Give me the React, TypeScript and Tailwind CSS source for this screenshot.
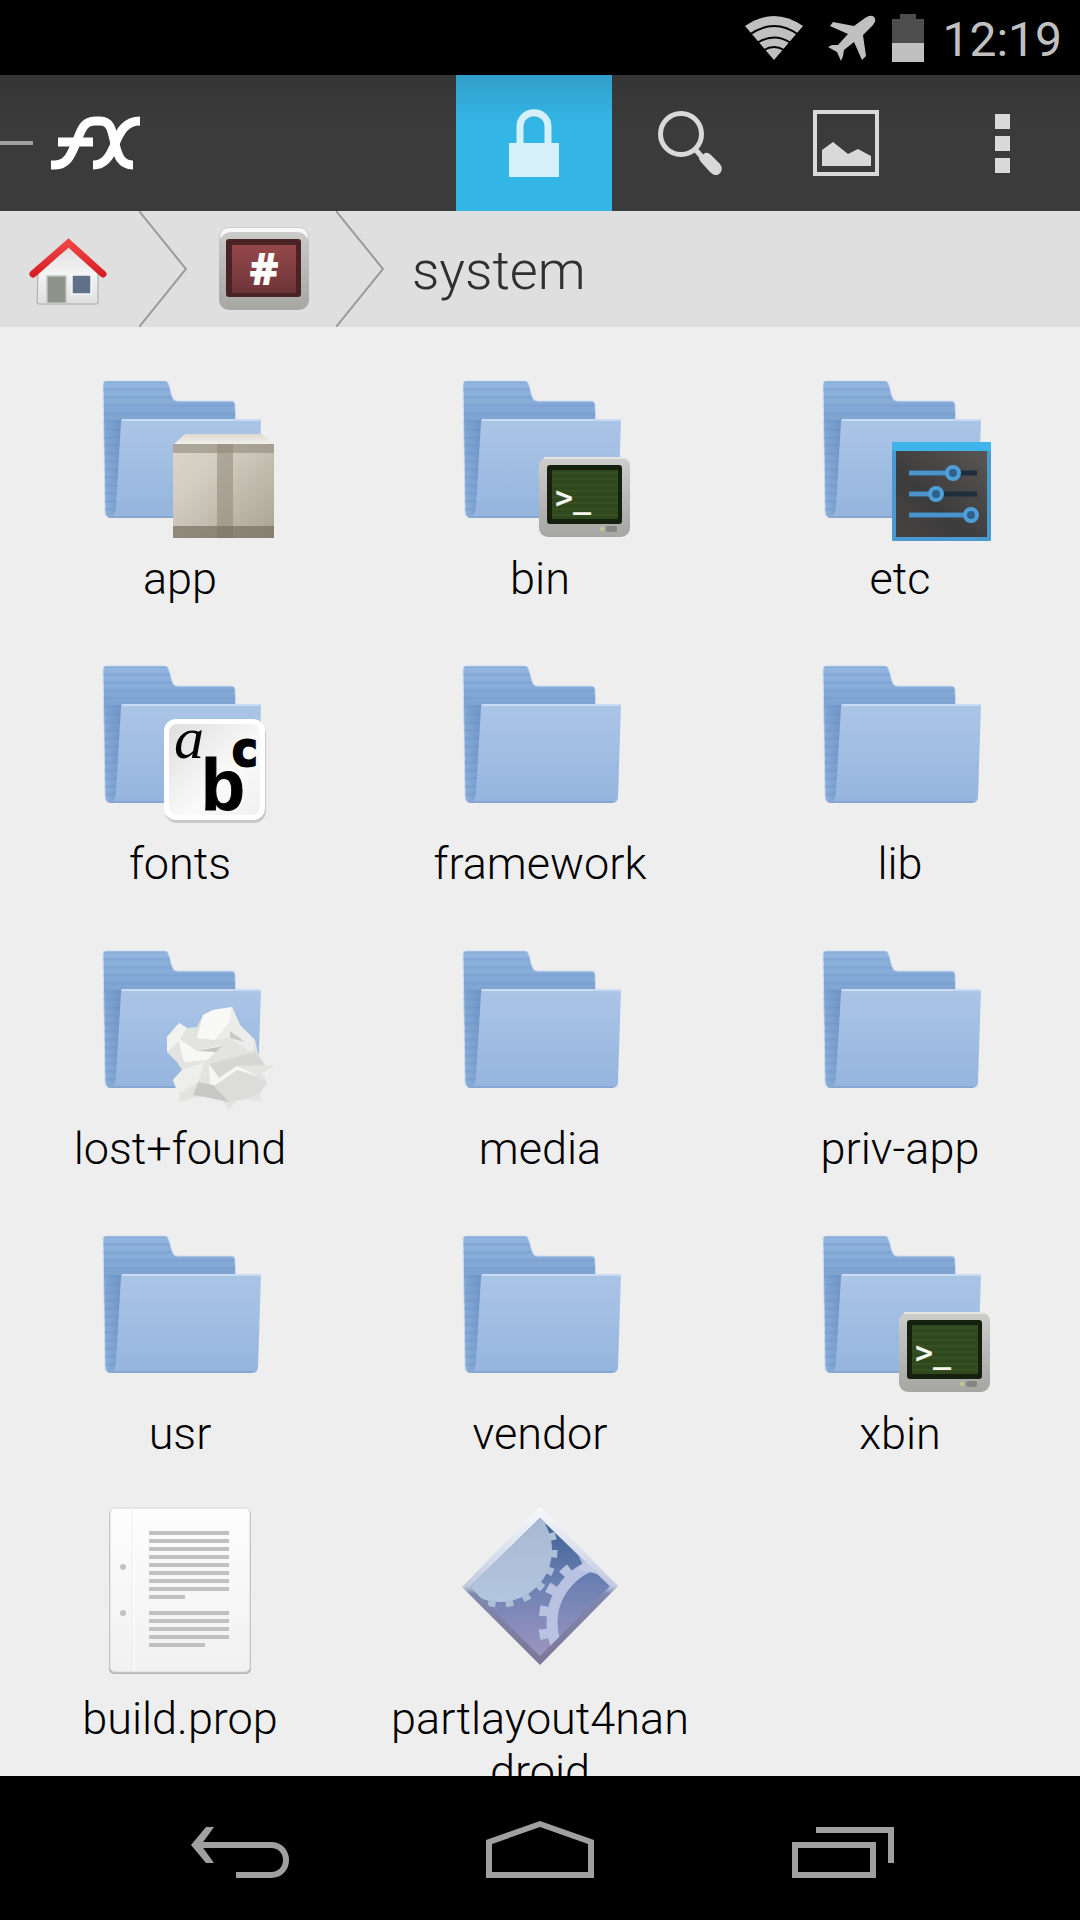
// App.tsx
import type { ReactNode } from "react";

type Entry = { name: string; icon: ReactNode };

// Gradientes compartilhados pelos ícones
function Gradients() {
  return (
    <svg className="absolute h-0 w-0" aria-hidden="true">
      <defs>
        <linearGradient id="folderBack" x1="0" y1="0" x2="0" y2="1">
          <stop offset="0" stopColor="#94b6df" />
          <stop offset="0.28" stopColor="#7fa4d2" />
          <stop offset="1" stopColor="#8db0da" />
        </linearGradient>
        <linearGradient id="folderFront" x1="0" y1="0" x2="0" y2="1">
          <stop offset="0" stopColor="#abc5e6" />
          <stop offset="1" stopColor="#95b5de" />
        </linearGradient>
        <pattern id="folderLines" width="10" height="8" patternUnits="userSpaceOnUse">
          <rect width="10" height="3" y="4" fill="#6f97ca" opacity="0.3" />
        </pattern>
        <linearGradient id="folderShade" x1="0" y1="0" x2="1" y2="0">
          <stop offset="0" stopColor="#5d87bd" stopOpacity="0" />
          <stop offset="1" stopColor="#5d87bd" stopOpacity="0.5" />
        </linearGradient>
        <linearGradient id="metal" x1="0" y1="0" x2="0" y2="1">
          <stop offset="0" stopColor="#cdcdcb" />
          <stop offset="0.5" stopColor="#b9b9b9" />
          <stop offset="1" stopColor="#a6a6a2" />
        </linearGradient>
        <linearGradient id="carton" x1="0" y1="0" x2="1" y2="1">
          <stop offset="0" stopColor="#d9d5c9" />
          <stop offset="0.3" stopColor="#d3cec2" />
          <stop offset="1" stopColor="#a9a393" />
        </linearGradient>
        <linearGradient id="cartonTop" x1="0" y1="0" x2="0" y2="1">
          <stop offset="0" stopColor="#dddad0" />
          <stop offset="1" stopColor="#f3f2ee" />
        </linearGradient>
        <linearGradient id="redScreen" x1="0" y1="0" x2="0" y2="1">
          <stop offset="0" stopColor="#95484a" />
          <stop offset="1" stopColor="#6d3538" />
        </linearGradient>
        <linearGradient id="roof" x1="0" y1="0" x2="0" y2="1">
          <stop offset="0" stopColor="#ef4444" />
          <stop offset="1" stopColor="#d81f26" />
        </linearGradient>
        <linearGradient id="wall" x1="0" y1="0" x2="0" y2="1">
          <stop offset="0" stopColor="#dcdcdc" />
          <stop offset="0.5" stopColor="#f4f4f4" />
          <stop offset="1" stopColor="#dfdfdf" />
        </linearGradient>
        <linearGradient id="darkPanel" x1="1" y1="0" x2="0" y2="1">
          <stop offset="0" stopColor="#595654" />
          <stop offset="0.6" stopColor="#3d3c3c" />
          <stop offset="1" stopColor="#454342" />
        </linearGradient>
        <linearGradient id="tile" x1="0" y1="0" x2="1" y2="1">
          <stop offset="0" stopColor="#dedede" />
          <stop offset="0.6" stopColor="#fafafa" />
          <stop offset="1" stopColor="#f0f0f0" />
        </linearGradient>
        <linearGradient id="page" x1="0" y1="0" x2="0" y2="1">
          <stop offset="0" stopColor="#fdfdfd" />
          <stop offset="1" stopColor="#f1f1f1" />
        </linearGradient>
        <linearGradient id="gem" x1="0" y1="0" x2="0" y2="1">
          <stop offset="0" stopColor="#3d5f94" />
          <stop offset="0.5" stopColor="#6e82b4" />
          <stop offset="1" stopColor="#9c94bf" />
        </linearGradient>
        <linearGradient id="gemEdge" x1="0" y1="0" x2="0" y2="1">
          <stop offset="0" stopColor="#f6fafd" />
          <stop offset="0.5" stopColor="#c3cae0" />
          <stop offset="0.55" stopColor="#8088ad" />
          <stop offset="1" stopColor="#7c7797" />
        </linearGradient>
        <linearGradient id="cog" x1="0" y1="0" x2="0" y2="1">
          <stop offset="0" stopColor="#a4b6ce" />
          <stop offset="1" stopColor="#b3c6df" />
        </linearGradient>
        <clipPath id="gemClip">
          <path d="M100 18 170 86 100 156 30 87Z" />
        </clipPath>
      </defs>
    </svg>
  );
}

function Folder({ children }: { children?: ReactNode }) {
  const back =
    "M26 21H85Q88 21 89 25L92 36Q93 41 98 41H152Q155 41 155 44L156 64 120 157H29Q25 157 25 152L23 24Q23 21 26 21Z";
  return (
    <svg viewBox="0 0 200 192" className="h-48 w-[200px] shrink-0" aria-hidden="true">
      <path d={back} fill="url(#folderBack)" stroke="#cfe0f4" strokeWidth="1" />
      <path d={back} fill="url(#folderLines)" />
      <path d="M25 60H42L35 156H27Z" fill="url(#folderShade)" />
      <path
        d="M42 59H181L178 153Q177 158 172 158H29Q35 157 36 148L41 62Q41 59 42 59Z"
        fill="url(#folderFront)"
      />
      <path d="M42 60H181" stroke="#c9dcf3" strokeWidth="2" />
      <path d="M28 157H173" stroke="#82a3cc" strokeWidth="1.5" />
      {children}
    </svg>
  );
}

function Carton() {
  return (
    <>
      <path d="M105 74H182L194 85H93Z" fill="url(#cartonTop)" />
      <rect x="93" y="84" width="101" height="94" rx="1" fill="url(#carton)" />
      <path d="M93 84H194V93H93Z" fill="#8f8979" opacity="0.6" />
      <path d="M137 84H153V178H137Z" fill="#8f8979" opacity="0.55" />
      <path d="M93 166H194V178H93Z" fill="#777163" opacity="0.7" />
    </>
  );
}

function Terminal() {
  return (
    <>
      <rect x="99" y="97" width="91" height="80" rx="9" fill="url(#metal)" />
      <path d="M104 98H185" stroke="#e4e4e2" strokeWidth="2" />
      <rect x="107" y="105" width="75" height="59" rx="3" fill="#15200f" />
      <rect x="112" y="110" width="66" height="49" fill="#30491c" />
      <path
        d="M112 113H178M112 119H178M112 125H178M112 131H178M112 137H178M112 143H178M112 149H178M112 155H178"
        stroke="#384f23"
        strokeWidth="2"
      />
      <text
        x="115"
        y="148"
        className="fill-[#f3f7ee] font-['DejaVu_Sans_Mono',monospace] text-[30px] font-bold"
      >
        &gt;_
      </text>
      <circle cx="162" cy="169" r="2" fill="#b5d48c" />
      <rect x="166" y="166" width="11" height="6" rx="2" fill="#858583" />
    </>
  );
}

function Sliders() {
  const rows = [
    { x: 153, y: 113 },
    { x: 136, y: 134 },
    { x: 171, y: 155 },
  ];
  return (
    <>
      <rect x="92" y="82" width="99" height="99" rx="1" fill="#4a9ad0" />
      <rect x="92" y="82" width="99" height="9" fill="#3db5ea" />
      <rect x="96" y="91" width="91" height="86" fill="url(#darkPanel)" />
      {rows.map((r) => (
        <g key={r.y}>
          <path d={`M109 ${r.y}H177`} stroke="#1f2e3b" strokeWidth="5" />
          <path d={`M109 ${r.y}H${r.x}`} stroke="#4a94cb" strokeWidth="5" />
          <circle cx={r.x} cy={r.y} r="6" fill="#2f608a" stroke="#4f9fd8" strokeWidth="4" />
        </g>
      ))}
    </>
  );
}

function FontTile() {
  return (
    <>
      <rect x="85" y="77" width="101" height="101" rx="12" fill="#c9c9c9" />
      <rect x="84" y="74" width="101" height="101" rx="12" fill="#ffffff" />
      <rect x="89" y="79" width="91" height="91" rx="8" fill="url(#tile)" />
      <text x="94" y="113" className="fill-black font-['Liberation_Serif',serif] text-[60px] italic">
        a
      </text>
      <text
        x="121"
        y="165"
        className="fill-black stroke-black stroke-1 font-['Liberation_Sans',sans-serif] text-[72px] font-bold"
      >
        b
      </text>
      <text
        x="152"
        y="121"
        className="fill-black stroke-black stroke-2 font-['Liberation_Sans_Narrow','DejaVu_Sans_Condensed',sans-serif] text-[48px] font-bold"
      >
        c
      </text>
    </>
  );
}

function CrumpledPaper() {
  return (
    <>
      <path
        d="M152 77 160 95 175 110 178 123 185 135 194 136 182 143 187 153 180 163 183 172 167 169 157 168 149 181 142 170 125 167 113 168 100 172 98 160 93 150 102 140 97 132 87 122 87 107 99 93 107 98 117 97 123 85 133 80Z"
        fill="#e3e3e1"
      />
      <path d="M152 77 133 80 123 85 117 108 135 110 150 92Z" fill="#f9f9f8" />
      <path d="M152 77 160 95 175 110 172 122 148 108 135 110 150 92Z" fill="#ececea" />
      <path d="M150 101 165 112 150 108Z" fill="#c9c9c6" />
      <path d="M99 93 107 98 98 112 87 122 87 107Z" fill="#f2f2f1" />
      <path d="M98 108 117 121 140 115 128 130 104 132Z" fill="#f7f7f6" />
      <path d="M117 121 142 116 136 122Z" fill="#c4c4c1" />
      <path d="M175 122 185 135 157 136 139 148 129 134Z" fill="#d6d6d4" />
      <path d="M157 136 187 153 180 163 167 169 150 172 133 155Z" fill="#dcdcda" />
      <path d="M129 134 139 148 157 136 178 146 157 140 140 152 130 158Z" fill="#f6f6f5" />
      <path d="M102 140 125 132 118 152 98 164 93 150Z" fill="#eeeeec" />
      <path d="M118 152 133 155 149 172 125 167 113 165Z" fill="#c8c8c5" />
    </>
  );
}

function PageIcon() {
  const lines = [33, 41, 49, 57, 65, 73, 81, 89, 97, 113, 121, 129, 137, 145];
  const ends: Record<number, number> = { 97: 105, 145: 125 };
  return (
    <svg viewBox="0 0 200 192" className="h-48 w-[200px] shrink-0" aria-hidden="true">
      <rect x="29" y="9" width="142" height="165" rx="5" fill="#b5b5b5" />
      <rect x="30" y="8" width="140" height="164" rx="5" fill="url(#page)" stroke="#d6d6d6" />
      <path d="M52 10V171" stroke="#f0f0f0" strokeWidth="1" />
      <path d="M54 10V171" stroke="#ffffff" strokeWidth="1" />
      <circle cx="43" cy="67" r="3" fill="#c2c2c2" />
      <circle cx="43" cy="113" r="3" fill="#c2c2c2" />
      {lines.map((y) => (
        <path key={y} d={`M69 ${y}H${ends[y] ?? 149}`} stroke="#c1c1c1" strokeWidth="4" />
      ))}
    </svg>
  );
}

function GearsIcon() {
  return (
    <svg viewBox="0 0 200 192" className="h-48 w-[200px] shrink-0" aria-hidden="true">
      <path d="M100 7 178 86 100 165 22 87Z" fill="url(#gemEdge)" />
      <path d="M100 18 170 86 100 156 30 87Z" fill="url(#gem)" />
      <g clipPath="url(#gemClip)">
        <circle cx="60" cy="50" r="52" fill="url(#cog)" />
        <circle
          cx="60"
          cy="50"
          r="54"
          fill="none"
          stroke="#aebfd8"
          strokeWidth="7"
          strokeDasharray="7.5 10.35"
        />
      </g>
      <g clipPath="url(#gemClip)">
        <circle cx="173" cy="123" r="61" fill="none" stroke="#b9c2e0" strokeWidth="11" />
        <circle
          cx="173"
          cy="123"
          r="70"
          fill="none"
          stroke="#b9c2e0"
          strokeWidth="9"
          strokeDasharray="10 13.15"
          strokeDashoffset="5"
        />
      </g>
      <path d="M138 69 144 62 178 86 170 86 157 74Z" fill="#c5cbe6" />
    </svg>
  );
}

const entries: Entry[] = [
  { name: "app", icon: <Folder><Carton /></Folder> },
  { name: "bin", icon: <Folder><Terminal /></Folder> },
  { name: "etc", icon: <Folder><Sliders /></Folder> },
  { name: "fonts", icon: <Folder><FontTile /></Folder> },
  { name: "framework", icon: <Folder /> },
  { name: "lib", icon: <Folder /> },
  { name: "lost+found", icon: <Folder><CrumpledPaper /></Folder> },
  { name: "media", icon: <Folder /> },
  { name: "priv-app", icon: <Folder /> },
  { name: "usr", icon: <Folder /> },
  { name: "vendor", icon: <Folder /> },
  { name: "xbin", icon: <Folder><Terminal /></Folder> },
  { name: "build.prop", icon: <PageIcon /> },
  { name: "partlayout4nandroid", icon: <GearsIcon /> },
];

function StatusBar() {
  return (
    <div className="flex h-[75px] shrink-0 items-center justify-end bg-black pr-[18px] text-[#c0c0c0]">
      <svg viewBox="0 0 60 48" className="mr-6 h-12 w-[60px]" aria-label="Wi-Fi">
        <path d="M30 46 1 12Q30 -8 59 12Z" fill="currentColor" />
        <path d="M5 21Q30 3 55 21M13 29Q30 18 47 29M20 36Q30 30 40 36" fill="none" stroke="#000" strokeWidth="2" />
      </svg>
      <svg viewBox="0 0 48 48" className="mr-4 h-12 w-12" aria-label="Modo avião">
        <path
          d="M46 3Q49 6 45 11L35 21 38 42 34 46 26 28 16 36 15 42 13 47 9 38 0 33 4 31 10 31 20 20 2 12 5 8 26 12 37 4Q43 0 46 3Z"
          fill="currentColor"
        />
      </svg>
      <svg viewBox="0 0 32 48" className="mr-[18px] h-12 w-8" aria-label="Bateria">
        <path d="M8 0H24V5H32V29H0V5H8Z" fill="#4d4d4d" />
        <path d="M0 29H32V48H0Z" fill="currentColor" />
      </svg>
      <span className="pt-1 text-[48px] leading-[56px]">12:19</span>
    </div>
  );
}

function ActionBar() {
  return (
    <header className="flex h-[136px] shrink-0 bg-linear-to-b from-[#353535] to-[#3b3b3b] to-40% text-[#d9d9d9]">
      <button aria-label="Abrir menu" className="flex items-center">
        <span className="h-1 w-[33px] bg-[#a0a0a0]" />
        <svg viewBox="0 0 96 60" className="ml-4 h-[60px] w-24 text-white" aria-label="FX">
          <g fill="none" stroke="currentColor" strokeWidth="9">
            <path d="M2 52H6C18 52 22 42 27 30 32 18 34 8 46 8H51C62 8 63 18 66 31 69 43 72 52 84 52" />
            <path d="M44 52C56 52 61 43 66 31 71 18 77 8 91 8" />
            <path d="M9 29H44" />
          </g>
        </svg>
      </button>
      <div className="ml-auto flex">
        <button
          aria-label="Bloqueio"
          className="flex w-[156px] items-center justify-center bg-linear-to-b from-[#319fc9] to-[#33b5e5] to-35% text-[#d6f0fa]"
        >
          <svg viewBox="0 0 50 68" className="h-[68px] w-[50px]">
            <path d="M11 36V18C11 -1 39 -1 39 18V36" fill="none" stroke="currentColor" strokeWidth="7" />
            <path d="M0 34H50V68H0Z" fill="currentColor" />
          </svg>
        </button>
        <button aria-label="Pesquisar" className="flex w-[156px] items-center justify-center">
          <svg viewBox="0 0 64 64" className="h-16 w-16">
            <circle cx="23" cy="23" r="20.5" fill="none" stroke="currentColor" strokeWidth="5" />
            <path d="M37 38 44 46" stroke="currentColor" strokeWidth="5" />
            <path d="M41 48Q41 46 47 42Q50 41 53 44L62 53Q66 59 61 63 57 66 52 61L43 51Z" fill="currentColor" />
          </svg>
        </button>
        <button aria-label="Imagens" className="flex w-[156px] items-center justify-center">
          <svg viewBox="0 0 66 66" className="h-[66px] w-[66px]">
            <path d="M2 2H64V64H2Z" fill="none" stroke="currentColor" strokeWidth="4" />
            <path d="M9 56V40L20 32 35 44 45 39 58 46V56Z" fill="currentColor" />
          </svg>
        </button>
        <button aria-label="Mais opções" className="flex w-[156px] flex-col items-center justify-center gap-[7px]">
          <span className="h-[15px] w-[15px] bg-current" />
          <span className="h-[15px] w-[15px] bg-current" />
          <span className="h-[15px] w-[15px] bg-current" />
        </button>
      </div>
    </header>
  );
}

function Chevron() {
  return (
    <svg viewBox="0 0 48 116" className="h-[116px] w-12" aria-hidden="true">
      <path d="M0 0 47 58 0 116" fill="none" stroke="#9a9a9a" strokeWidth="2" />
    </svg>
  );
}

function Breadcrumbs() {
  return (
    <nav className="flex h-[116px] shrink-0 items-center bg-[#dfdfdf]">
      <button aria-label="Início" className="flex w-[139px] justify-center pt-1 pr-1">
        <svg viewBox="0 0 78 68" className="h-[68px] w-[78px]">
          <path d="M9 36 40 7 69 36V65Q69 67 67 67H10Q8 67 8 65Z" fill="url(#wall)" stroke="#a8a8a8" strokeWidth="1" />
          <path d="M18 39H37V66H18Z" fill="#8f918b" stroke="#c4c4c0" strokeWidth="1.5" />
          <path d="M43 38H62V57H43Z" fill="#5f7088" stroke="#f5f5f5" strokeWidth="1.5" />
          <path d="M4 37 39.5 6 74 37" fill="none" stroke="url(#roof)" strokeWidth="7" strokeLinecap="round" />
        </svg>
      </button>
      <Chevron />
      <button aria-label="Raiz" className="flex w-[149px] justify-center pl-1">
        <svg viewBox="0 0 90 84" className="h-[84px] w-[90px]">
          <rect width="90" height="83" rx="10" fill="url(#metal)" />
          <path d="M1 12Q1 1 11 1H79Q89 1 89 12 85 5 78 5H12Q5 5 1 12Z" fill="#f8f8f8" />
          <rect x="7" y="12" width="75" height="58" rx="3" fill="#4a2325" />
          <rect x="13" y="18" width="64" height="48" fill="url(#redScreen)" />
          <text
            x="45"
            y="58"
            textAnchor="middle"
            className="fill-white font-['Noto_Sans',sans-serif] text-[44px] font-black"
          >
            #
          </text>
        </svg>
      </button>
      <Chevron />
      <span className="pt-1 pl-7 text-[54px] leading-[64px] font-light text-[#303030]">system</span>
    </nav>
  );
}

function NavBar() {
  return (
    <div className="flex h-36 shrink-0 items-center bg-black pr-[88px] pl-[92px] text-[#a0a0a0]">
      <button aria-label="Voltar" className="flex flex-1 justify-center">
        <svg viewBox="0 0 100 60" className="h-[60px] w-[100px]">
          <path d="M8 27H80C100 27 100 57 80 57H45" fill="none" stroke="currentColor" strokeWidth="6" />
          <path d="M15 9H23L10 27 23 45H15L0 27Z" fill="currentColor" />
        </svg>
      </button>
      <button aria-label="Tela inicial" className="flex flex-1 justify-center">
        <svg viewBox="0 0 108 60" className="h-[60px] w-[108px]">
          <path d="M0 22 54 3 108 22V60H0ZM6 26V54H102V26L54 9Z" fill="currentColor" fillRule="evenodd" />
        </svg>
      </button>
      <button aria-label="Recentes" className="flex flex-1 justify-center pl-1">
        <svg viewBox="0 0 102 60" className="h-[60px] w-[102px]">
          <path d="M0 24H84V60H0ZM6 30V54H78V30Z" fill="currentColor" fillRule="evenodd" />
          <path d="M24 9H102V45H96V15H24Z" fill="currentColor" />
        </svg>
      </button>
    </div>
  );
}

export default function App() {
  return (
    <div className="flex h-screen flex-col bg-[#eeeeee] font-[Roboto,sans-serif]">
      <Gradients />
      <StatusBar />
      <ActionBar />
      <Breadcrumbs />

      {/* Grade de arquivos */}
      <main className="min-h-0 flex-1 overflow-y-auto pt-[33px] [scrollbar-width:none]">
        <div className="grid auto-rows-[285px] grid-cols-3">
          {entries.map((entry) => (
            <button key={entry.name} className="flex flex-col items-center px-[26px]">
              {entry.icon}
              <span className="text-[45px] leading-[53px] font-light break-all text-black">{entry.name}</span>
            </button>
          ))}
        </div>
      </main>

      <NavBar />
    </div>
  );
}
